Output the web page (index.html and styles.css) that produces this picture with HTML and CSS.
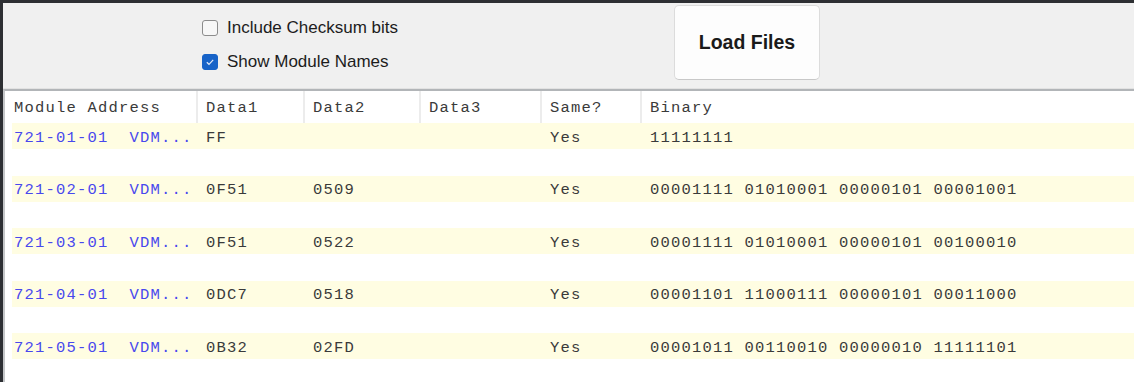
FILE: index.html
```html
<!DOCTYPE html>
<html lang="en">
<head>
    <meta charset="UTF-8">
    <meta name="viewport" content="width=device-width, initial-scale=1.0">
    <title>Module Data Viewer</title>
    <link rel="stylesheet" href="styles.css">
</head>
<body>
    <div class="window">
        <div class="toolbar">
            <div class="options">
                <label class="option">
                    <span class="box"></span>
                    <span>Include Checksum bits</span>
                </label>
                <label class="option">
                    <span class="box checked">
                        <svg width="16" height="16" viewBox="0 0 16 16"><path d="M4.8 8.2 L7 10.3 L11.2 5.8" fill="none" stroke="#dfe8f7" stroke-width="1.2"/></svg>
                    </span>
                    <span>Show Module Names</span>
                </label>
            </div>
            <button class="load-btn">Load Files</button>
        </div>
        <div class="grid">
            <div class="row head">
                <div class="cell">Module Address</div>
                <div class="cell">Data1</div>
                <div class="cell">Data2</div>
                <div class="cell">Data3</div>
                <div class="cell">Same?</div>
                <div class="cell">Binary</div>
            </div>
            <div id="rows"></div>
        </div>
    </div>
    <script>
        const modules = [
            { addr: '721-01-01', name: 'VDM...', d1: 'FF', d2: '', d3: '', same: 'Yes', bin: '11111111' },
            { addr: '721-02-01', name: 'VDM...', d1: '0F51', d2: '0509', d3: '', same: 'Yes', bin: '00001111 01010001 00000101 00001001' },
            { addr: '721-03-01', name: 'VDM...', d1: '0F51', d2: '0522', d3: '', same: 'Yes', bin: '00001111 01010001 00000101 00100010' },
            { addr: '721-04-01', name: 'VDM...', d1: '0DC7', d2: '0518', d3: '', same: 'Yes', bin: '00001101 11000111 00000101 00011000' },
            { addr: '721-05-01', name: 'VDM...', d1: '0B32', d2: '02FD', d3: '', same: 'Yes', bin: '00001011 00110010 00000010 11111101' }
        ];

        const list = document.getElementById('rows');

        modules.forEach(m => {
            const row = document.createElement('div');
            row.className = 'row data';
            row.innerHTML = `
                <div class="cell module">${m.addr}  ${m.name}</div>
                <div class="cell">${m.d1}</div>
                <div class="cell">${m.d2}</div>
                <div class="cell">${m.d3}</div>
                <div class="cell">${m.same}</div>
                <div class="cell">${m.bin}</div>
            `;
            list.appendChild(row);

            const gap = document.createElement('div');
            gap.className = 'row spacer';
            list.appendChild(gap);
        });
    </script>
</body>
</html>
```

FILE: styles.css
```css
body {
    margin: 0;
    padding: 0;
    background: #2d2f33;
    font-family: "Liberation Sans", Arial, sans-serif;
}

.window {
    margin-top: 3px;
    margin-left: 3px;
    height: 379px;
    background: #fff;
    overflow: hidden;
}

.toolbar {
    display: flex;
    align-items: flex-start;
    height: 85px;
    padding-left: 199px;
    background: #f0f0f0;
    border-bottom: 1px solid #e2e2e2;
}

.options {
    display: flex;
    flex-direction: column;
    width: 472px;
    padding-top: 8px;
}

.option {
    display: flex;
    align-items: center;
    gap: 9px;
    height: 34px;
    font-size: 17px;
    color: #1c1c1c;
}

.box {
    width: 14px;
    height: 14px;
    border: 1px solid #8c8c8c;
    border-radius: 3px;
    background: #f7f7f7;
    display: flex;
}

.box.checked {
    background: #1763c8;
    border-color: #1763c8;
}

.box svg {
    margin: -1px;
}

.load-btn {
    margin-top: 2px;
    width: 146px;
    height: 75px;
    background: #fdfdfd;
    border: 1px solid #dcdcdc;
    border-bottom-color: #c8c8c8;
    border-radius: 5px;
    font-family: "Liberation Sans", Arial, sans-serif;
    font-weight: bold;
    font-size: 19.5px;
    color: #1a1a1a;
}

.grid {
    border-top: 2px solid #b2b5b8;
    border-left: 2px solid #c4c6c8;
    height: 100%;
    padding-left: 7px;
    font-family: "Liberation Mono", "Courier New", monospace;
    font-size: 15.5px;
    letter-spacing: 1.2px;
    color: #3a3a3a;
}

.row {
    display: grid;
    grid-template-columns: 184px 107px 116px 121px 100px 1fr;
    align-items: center;
}

.head {
    height: 32px;
}

.head .cell {
    height: 100%;
    display: flex;
    align-items: center;
    padding-top: 2px;
    box-sizing: border-box;
}

.head .cell + .cell {
    border-left: 2px solid #ececec;
    padding-left: 8px;
}

.cell {
    padding-left: 10px;
    padding-top: 3px;
    white-space: pre;
}

.row .cell:first-child {
    padding-left: 2px;
}

.data {
    height: 26.25px;
    background: #fffde2;
}

.spacer {
    height: 26.25px;
}

.module {
    color: #4848ee;
}
```
